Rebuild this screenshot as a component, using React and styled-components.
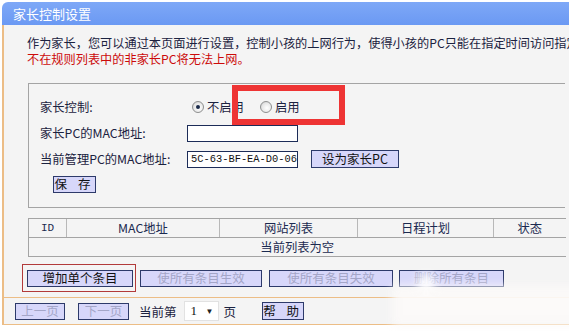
import React from "react";
import styled, { createGlobalStyle } from "styled-components";

const GlobalStyle = createGlobalStyle`
  html, body {
    margin: 0;
    padding: 0;
    background: #fff;
  }
  body {
    font-family: "Noto Sans CJK SC", "DejaVu Sans", sans-serif;
    color: #1b2240;
  }
`;

const Page = styled.div`
  position: relative;
  width: 569px;
  height: 331px;
  overflow: hidden;
  box-sizing: border-box;
  padding: 2px 0 0 2px;
  display: flex;
  flex-direction: column;
  background: #fff;
`;

const TitleBar = styled.div`
  height: 23px;
  line-height: 23px;
  padding-left: 11px;
  border-top-left-radius: 6px;
  background: linear-gradient(#7ea8f7, #6b99f3);
  color: #fff;
  font-size: 13px;
`;

const Panel = styled.div`
  display: flex;
  flex-direction: column;
  border-left: 2px solid #ecbd86;
  background: #f4f4f4;
`;

const Intro = styled.div`
  padding: 10px 0 0 23px;
  font-size: 12.2px;
  line-height: 16px;
  white-space: nowrap;
`;

const IntroLine = styled.div`
  height: 16px;
  overflow: hidden;
  color: ${(p) => (p.$warn ? "#cc0a0a" : "inherit")};
`;

const SettingsBox = styled.div`
  margin: 16px 4px 0 24px;
  border: 1px solid #a4a4a4;
  border-right: none;
  padding: 14px 0 15px 11px;
  display: flex;
  flex-direction: column;
  gap: 8px;
`;

const FieldRow = styled.div`
  display: grid;
  grid-template-columns: 147px auto;
  align-items: center;
  height: ${(p) => p.$h || 18}px;
  font-size: 12.3px;
`;

const Controls = styled.div`
  display: flex;
  align-items: center;
`;

const RadioLabel = styled.label`
  display: flex;
  align-items: center;
  gap: 3px;
  margin-left: ${(p) => p.$ml || 0}px;
`;

const Radio = styled.span`
  width: 12px;
  height: 12px;
  box-sizing: border-box;
  border-radius: 50%;
  border: 1px solid #8e8f8f;
  background: radial-gradient(circle at 60% 60%, #ffffff 0%, #e8e8e8 55%, #c8c8c8 100%);
  display: flex;
  align-items: center;
  justify-content: center;
  &::after {
    content: "";
    width: 4px;
    height: 4px;
    border-radius: 50%;
    background: ${(p) => (p.$on ? "#1a2a4a" : "transparent")};
  }
`;

const TextInput = styled.div`
  width: 111px;
  height: 17px;
  box-sizing: border-box;
  border: 1px solid #1c2c58;
  background: #fff;
  font-family: "Liberation Mono", "DejaVu Sans Mono", monospace;
  font-size: 10.4px;
  line-height: 15px;
  padding-left: 3px;
  color: #111;
  white-space: nowrap;
`;

const Btn = styled.button`
  width: ${(p) => p.$w}px;
  height: ${(p) => p.$h || 18}px;
  margin-left: ${(p) => p.$ml || 0}px;
  padding: 0;
  box-sizing: border-box;
  border: 1px solid #2d3a6a;
  background: #d7d7fa;
  color: ${(p) => (p.disabled ? "#a4a6c8" : "#111")};
  font-family: "Noto Sans CJK SC", sans-serif;
  font-size: 12.5px;
  line-height: 1;
  letter-spacing: ${(p) => p.$ls || 0}px;
  cursor: pointer;
`;

const RuleTable = styled.table`
  margin: 10px 4px 0 24px;
  width: 537px;
  border-collapse: collapse;
  table-layout: fixed;
  font-size: 12.3px;
  color: #1b2a50;
  td {
    height: 17px;
    padding: 0;
    text-align: center;
    border-top: 1px solid #a4a4a4;
    border-bottom: 1px solid #a4a4a4;
  }
  td + td {
    border-left: 1px solid #b8b8b8;
  }
  tr td:first-child {
    border-left: 1px solid #a4a4a4;
  }
`;

const IdCell = styled.td`
  font-family: "Liberation Mono", monospace;
  font-size: 11px;
`;

const ActionBar = styled.div`
  display: flex;
  align-items: flex-end;
  margin: 7px 0 0 18px;
  padding-bottom: 5px;
`;

const Marked = styled.div`
  border: 1px solid #b23a3a;
  padding: 5px 2px 4px 4px;
  display: flex;
`;

const Shifted = styled.div`
  display: flex;
  margin-bottom: 5px;
`;

const PagerBar = styled.div`
  height: 26px;
  border-top: 1px solid #ecbd86;
  border-bottom: 1px solid #ecbd86;
  display: flex;
  align-items: center;
  padding: 0 0 0 11px;
  font-size: 12.5px;
`;

const PagerText = styled.span`
  margin-left: ${(p) => p.$ml || 0}px;
  color: #1b2240;
`;

const PageSelect = styled.div`
  width: 35px;
  height: 20px;
  box-sizing: border-box;
  margin-left: 7px;
  background: #fff;
  border: 1px solid #e2e2e2;
  display: flex;
  align-items: center;
  justify-content: space-between;
  padding: 0 4px 0 6px;
  font-family: "Liberation Serif", serif;
  font-size: 13px;
  color: #111;
`;

const Arrow = styled.span`
  font-size: 8px;
  color: #222;
`;

const Highlight = styled.div`
  position: absolute;
  left: 232px;
  top: 85px;
  width: 113px;
  height: 40px;
  box-sizing: border-box;
  border: 6px solid #ee3434;
`;

const Watermark = styled.div`
  position: absolute;
  left: 392px;
  top: 286px;
  width: 200px;
  height: 40px;
  background: rgba(252, 250, 248, 0.92);
  filter: blur(5px);
  &::before {
    content: "";
    position: absolute;
    left: 26px;
    top: -12px;
    width: 16px;
    height: 14px;
    background: rgba(255, 255, 255, 0.95);
  }
`;

export default function App() {
  return (
    <>
      <GlobalStyle />
      <Page>
        <TitleBar>家长控制设置</TitleBar>
        <Panel>
          <Intro>
            <IntroLine>作为家长，您可以通过本页面进行设置，控制小孩的上网行为，使得小孩的PC只能在指定时间访问指定</IntroLine>
            <IntroLine $warn>不在规则列表中的非家长PC将无法上网。</IntroLine>
          </Intro>

          <SettingsBox>
            <FieldRow>
              <span>家长控制:</span>
              <Controls>
                <RadioLabel $ml={5}>
                  <Radio $on />
                  不启用
                </RadioLabel>
                <RadioLabel $ml={16}>
                  <Radio />
                  启用
                </RadioLabel>
              </Controls>
            </FieldRow>
            <FieldRow>
              <span>家长PC的MAC地址:</span>
              <Controls>
                <TextInput />
              </Controls>
            </FieldRow>
            <FieldRow>
              <span>当前管理PC的MAC地址:</span>
              <Controls>
                <TextInput>5C-63-BF-EA-D0-06</TextInput>
                <Btn $w={88} $ml={13}>设为家长PC</Btn>
              </Controls>
            </FieldRow>
            <FieldRow $h={16}>
              <Controls>
                <Btn $w={43} $h={17} $ml={13} $ls={4}>保 存</Btn>
              </Controls>
            </FieldRow>
          </SettingsBox>

          <RuleTable>
            <colgroup>
              <col style={{ width: 38 }} />
              <col style={{ width: 153 }} />
              <col style={{ width: 138 }} />
              <col style={{ width: 136 }} />
              <col style={{ width: 72 }} />
            </colgroup>
            <tbody>
              <tr>
                <IdCell>ID</IdCell>
                <td>MAC地址</td>
                <td>网站列表</td>
                <td>日程计划</td>
                <td>状态</td>
              </tr>
              <tr>
                <td colSpan={5}>当前列表为空</td>
              </tr>
            </tbody>
          </RuleTable>

          <ActionBar>
            <Marked>
              <Btn $w={106} $h={17}>增加单个条目</Btn>
            </Marked>
            <Shifted>
              <Btn $w={122} $h={17} $ml={4} disabled>使所有条目生效</Btn>
              <Btn $w={124} $h={17} $ml={7} disabled>使所有条目失效</Btn>
              <Btn $w={105} $h={17} $ml={6} disabled>删除所有条目</Btn>
            </Shifted>
          </ActionBar>

          <PagerBar>
            <Btn $w={50} $h={17} disabled>上一页</Btn>
            <Btn $w={51} $h={17} $ml={13} disabled>下一页</Btn>
            <PagerText $ml={10}>当前第</PagerText>
            <PageSelect>
              1<Arrow>▼</Arrow>
            </PageSelect>
            <PagerText $ml={5}>页</PagerText>
            <Btn $w={42} $h={18} $ml={26} $ls={4}>帮 助</Btn>
          </PagerBar>
        </Panel>

        <Highlight />
        <Watermark />
      </Page>
    </>
  );
}
